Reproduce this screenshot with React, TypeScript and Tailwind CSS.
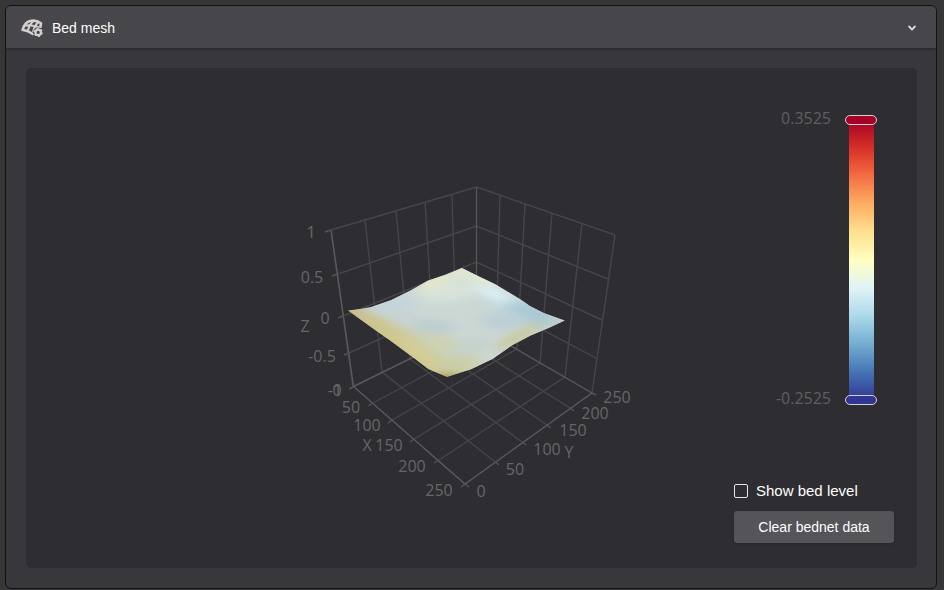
import React, { useState } from "react";

type Point = [number, number];

interface AxisLabel {
  text: string;
  x: number;
  y: number;
}

// Top and bottom ends of the grid lines on the two back walls
const LEFT_WALL: Point[][] = [
  [[331, 230], [353, 387]],
  [[365, 220], [382, 372]],
  [[396, 211], [410, 359]],
  [[425, 202], [434, 347]],
  [[452, 194], [456, 336]],
];

const RIGHT_WALL: Point[][] = [
  [[500, 195], [496, 337]],
  [[525, 204], [517, 349]],
  [[552, 213], [540, 363]],
  [[582, 223], [565, 377]],
  [[615, 235], [592, 393]],
];

const LEVELS: Point[][] = [
  [[331, 230], [476.5, 187], [615, 235]],
  [[338, 274], [476.5, 226], [608, 279]],
  [[343, 316], [476.5, 262], [602, 320]],
  [[349, 353], [476.5, 295], [596, 358]],
];

const FLOOR: Point[][] = [
  [[373, 403], [496, 337]],
  [[392, 420], [517, 349]],
  [[414, 439], [540, 363]],
  [[439, 460], [565, 377]],
  [[495, 462], [382, 372]],
  [[522, 442], [410, 359]],
  [[547, 425], [434, 347]],
  [[570, 408], [456, 336]],
];

const AXES: Point[][] = [
  [[331, 230], [353.5, 386.5], [465, 484], [592, 393]],
  [[353.5, 386.5], [476.5, 326], [592, 393]],
];

const TICKS: Point[][] = [
  [[331, 230], [325, 232]],
  [[338, 274], [332, 276]],
  [[343, 316], [338, 318]],
  [[349, 353], [344, 355]],
  [[353, 387], [349, 389]],
  [[373, 403], [368, 406]],
  [[392, 420], [388, 423]],
  [[414, 439], [410, 442]],
  [[439, 460], [434, 463]],
  [[465, 484], [461, 487]],
  [[465, 484], [469, 487]],
  [[495, 462], [499, 465]],
  [[522, 442], [526, 445]],
  [[547, 425], [551, 428]],
  [[570, 408], [574, 411]],
  [[592, 393], [596, 395]],
];

const LABELS: AxisLabel[] = [
  { text: "1", x: 311, y: 238 },
  { text: "0.5", x: 312, y: 283 },
  { text: "0", x: 325, y: 324 },
  { text: "-0.5", x: 322, y: 362 },
  { text: "-1", x: 335, y: 396 },
  { text: "Z", x: 305, y: 332 },
  { text: "0", x: 337, y: 396 },
  { text: "50", x: 351, y: 413 },
  { text: "100", x: 367, y: 431 },
  { text: "150", x: 389, y: 451 },
  { text: "200", x: 412, y: 472 },
  { text: "250", x: 439, y: 496 },
  { text: "X", x: 367, y: 451 },
  { text: "0", x: 481, y: 497 },
  { text: "50", x: 515, y: 475 },
  { text: "100", x: 547, y: 455 },
  { text: "150", x: 573, y: 436 },
  { text: "200", x: 595, y: 419 },
  { text: "250", x: 617, y: 403 },
  { text: "Y", x: 569, y: 458 },
];

const SURFACE =
  "M348 310.5L360 309L371 307L391 300L411 290L428 280.5L445 275L462 268L478 276L495 284L520 299L530 306L544 313L565 320.5L549 328L530 336L512 345.5L493 359L471 369.5L447 377L428 369L415 359L392 342L375 330Z";

// Soft patches of colour on the mesh: cx, cy, rx, ry, angle, fill
const PATCHES: [number, number, number, number, number, string][] = [
  [460, 272, 34, 12, 0, "#dde6d3"],
  [446, 291, 32, 10, -4, "#d9e3da"],
  [433, 283, 13, 5, -15, "#ebe9c4"],
  [489, 284, 14, 5, 28, "#edf1cf"],
  [510, 303, 30, 9, 26, "#c0d9e0"],
  [494, 294, 22, 5, 20, "#e3f3f5"],
  [388, 307, 30, 8, -14, "#c3d4dc"],
  [410, 320, 24, 7, 14, "#c6d4d6"],
  [532, 315, 26, 10, 18, "#a9c8d4"],
  [505, 321, 24, 9, 0, "#bccfd5"],
  [558, 321, 8, 5, 0, "#b9cbc9"],
  [436, 327, 20, 5, 6, "#b7cad0"],
  [362, 317, 24, 6, 33, "#c5bd90"],
  [392, 334, 36, 6, 34, "#cfc690"],
  [420, 352, 26, 7, 34, "#d4ce98"],
  [446, 346, 20, 10, 15, "#cdd2b2"],
  [472, 347, 20, 8, -15, "#c5d2cc"],
  [454, 365, 28, 6, -12, "#cbcfa4"],
  [518, 337, 26, 5, -27, "#c9c694"],
  [447, 379, 15, 4, 0, "#9c8450"],
];

function toPoints(line: Point[]) {
  return line.map((p) => p.join(",")).join(" ");
}

function GridLines({ lines, color }: { lines: Point[][]; color: string }) {
  return (
    <g fill="none" stroke={color} strokeWidth="1.4">
      {lines.map((line, i) => (
        <polyline key={i} points={toPoints(line)} />
      ))}
    </g>
  );
}

function MeshIcon() {
  return (
    <svg width="22" height="18" viewBox="0 0 22 18" fill="none" aria-hidden="true">
      <path
        d="M1.6 10.8C2.8 6.4 5.6 3 9 2C13 1.2 16.6 1.8 20 4.2L19.4 8M1.6 10.8C5 11.4 8.5 12.6 11.8 15"
        stroke="#d3d0cf"
        strokeWidth="2.6"
        strokeLinejoin="round"
        strokeLinecap="round"
      />
      <path
        d="M4.2 6.6C8.5 5.8 14 6.6 19.6 9M12.6 1.8C9.9 4.2 7.8 7.6 6.8 12M17.4 2.8C15 5.2 13.2 8.5 12 13"
        stroke="#d3d0cf"
        strokeWidth="2.1"
      />
      <circle cx="17.2" cy="13.4" r="5" fill="#47464a" />
      <circle cx="17.2" cy="13.4" r="2.7" stroke="#d3d0cf" strokeWidth="2.2" />
      <circle cx="17.2" cy="13.4" r="4" stroke="#d3d0cf" strokeWidth="1.2" strokeDasharray="2.1 2.09" />
    </svg>
  );
}

function MeshPlot() {
  return (
    <svg
      className="mt-28 font-['Open_Sans','Noto_Sans',sans-serif] text-base font-medium"
      width="351"
      height="324"
      viewBox="296 180 351 324"
      role="img"
      aria-label="Bed mesh surface"
    >
      <defs>
        <clipPath id="surface">
          <path d={SURFACE} />
        </clipPath>
        <linearGradient id="base" gradientUnits="userSpaceOnUse" x1="400" y1="345" x2="434" y2="295">
          <stop offset="0" stopColor="#cfc78f" />
          <stop offset="0.3" stopColor="#cbd0b4" />
          <stop offset="0.6" stopColor="#cbd8d4" />
        </linearGradient>
        <filter id="soften" x="-80%" y="-300%" width="260%" height="700%">
          <feGaussianBlur stdDeviation="8 4" />
        </filter>
      </defs>

      <GridLines lines={[...LEFT_WALL, ...RIGHT_WALL, ...LEVELS]} color="#464649" />
      <GridLines lines={FLOOR} color="#464649" />
      <GridLines lines={[[[476.5, 187], [476.5, 326]]]} color="#545458" />
      <GridLines lines={AXES} color="#5a5a5d" />
      <GridLines lines={TICKS} color="#545458" />

      {/* Surface */}
      <g clipPath="url(#surface)">
        <path d={SURFACE} fill="url(#base)" />
        {PATCHES.map(([cx, cy, rx, ry, angle, fill], i) => (
          <ellipse
            key={i}
            cx={cx}
            cy={cy}
            rx={rx}
            ry={ry}
            fill={fill}
            filter="url(#soften)"
            transform={`rotate(${angle} ${cx} ${cy})`}
          />
        ))}
      </g>

      <g fill="#666669" textAnchor="middle">
        {LABELS.map((label, i) => (
          <text key={i} x={label.x} y={label.y}>
            {label.text}
          </text>
        ))}
      </g>
    </svg>
  );
}

const THUMB =
  "block m-0 h-1/2 w-8 appearance-none bg-transparent [writing-mode:vertical-lr] [direction:rtl] [&::-webkit-slider-thumb]:appearance-none [&::-webkit-slider-thumb]:h-2.5 [&::-webkit-slider-thumb]:w-8 [&::-webkit-slider-thumb]:rounded-full [&::-webkit-slider-thumb]:border [&::-webkit-slider-thumb]:border-solid [&::-webkit-slider-thumb]:border-[#d4cfd8]";

function ColorScale() {
  const [max, setMax] = useState(0.3525);
  const [min, setMin] = useState(-0.2525);

  return (
    <div className="mt-[47px] mr-[17px] flex items-start gap-3.5">
      <div className="flex h-[286px] flex-col justify-between text-right font-['Open_Sans','Noto_Sans',sans-serif] text-base leading-1.5 font-medium text-[#5f5f62]">
        <span>{max.toFixed(4)}</span>
        <span>{min.toFixed(4)}</span>
      </div>
      <div className="flex h-[290px] w-8 flex-col bg-[linear-gradient(#a50026,#d73027,#f46d43,#fdae61,#fee090,#ffffbf,#e0f3f8,#abd9e9,#74add1,#4575b4,#313695)] bg-[length:25px_280px] bg-center bg-no-repeat">
        <input
          type="range"
          aria-label="Upper limit"
          min={0.05}
          max={0.3525}
          step={0.0005}
          value={max}
          onChange={(e) => setMax(Number(e.target.value))}
          className={`${THUMB} [&::-webkit-slider-thumb]:bg-[#a50026]`}
        />
        <input
          type="range"
          aria-label="Lower limit"
          min={-0.2525}
          max={0.05}
          step={0.0005}
          value={min}
          onChange={(e) => setMin(Number(e.target.value))}
          className={`${THUMB} [&::-webkit-slider-thumb]:bg-[#313695]`}
        />
      </div>
    </div>
  );
}

export default function App() {
  const [showLevel, setShowLevel] = useState(false);

  return (
    <main className="min-h-screen bg-[#363636] pt-[5px] pr-[7px] pl-[5px] font-['Liberation_Sans',Arial,sans-serif] text-sm text-white">
      <section className="overflow-hidden rounded-md border border-[#131315] bg-[#38373b]">
        <header className="flex h-[42px] items-center justify-between bg-[#47464a] pt-0.5 pr-5 pl-[15px] shadow-[0_1px_3px_rgba(0,0,0,0.35)]">
          <h1 className="flex items-center gap-[9px]">
            <MeshIcon />
            <span>Bed mesh</span>
          </h1>
          <button type="button" aria-label="Collapse">
            <svg width="8" height="6" viewBox="0 0 8 6" fill="none" stroke="#dcd8e0" strokeWidth="1.8">
              <path d="M0.6 1L4 4.4L7.4 1" />
            </svg>
          </button>
        </header>

        <div className="p-5 pr-[19px]">
          <div className="grid min-h-[500px] grid-cols-[1fr_auto_1fr] items-start rounded-[5px] bg-[#2e2d31]">
            <div />
            <MeshPlot />

            <div className="flex flex-col items-end pr-[23px]">
              <ColorScale />

              {/* Controls */}
              <div className="mt-[76px] flex w-40 flex-col gap-2.5">
                <label className="flex h-5 items-center gap-2 text-[15px]">
                  <input
                    type="checkbox"
                    checked={showLevel}
                    onChange={(e) => setShowLevel(e.target.checked)}
                    className="size-3.5 appearance-none rounded-xs border border-[#e6e6e8] checked:bg-[#4575b4]"
                  />
                  Show bed level
                </label>
                <button
                  type="button"
                  className="h-8 rounded-[3px] bg-[#545459] text-sm shadow-[0_1px_2px_rgba(0,0,0,0.2)]"
                >
                  Clear bednet data
                </button>
              </div>
            </div>
          </div>
        </div>
      </section>
    </main>
  );
}
